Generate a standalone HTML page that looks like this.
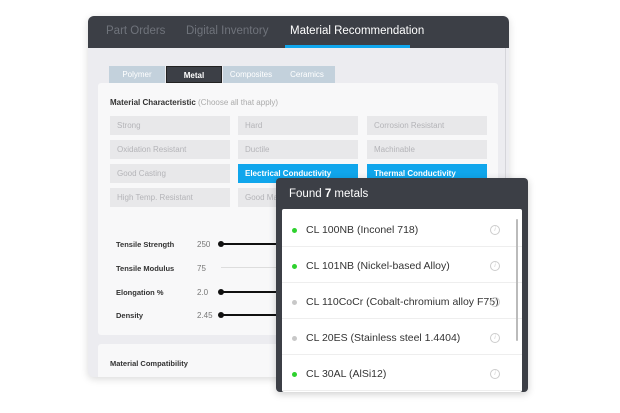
<!DOCTYPE html>
<html><head><style>
*{margin:0;padding:0;box-sizing:border-box}
body{width:620px;height:413px;background:#fff;font-family:"Liberation Sans",sans-serif;position:relative;overflow:hidden}
.abs{position:absolute}
.main{left:88px;top:16px;width:421px;height:361px;background:#ececf0;border-radius:6px;box-shadow:0 2px 8px rgba(0,0,0,.15);overflow:hidden}
.hdr{left:0;top:0;width:421px;height:32px;background:#3c3f46}
.tab{top:9px;font-size:11.5px;color:#6f737b}
.stab{top:50px;height:17px;width:56px;background:#c3d1dc;color:#fff;font-size:8px;text-align:center;line-height:17px}
.card{left:10px;top:67px;width:400px;height:252px;background:#f8f8f9;border-radius:3px}
.btn{width:120px;height:19px;background:#e8e8ea;color:#b4b4b8;font-size:8px;line-height:19px;padding-left:7px}
.btn.on{background:#10a6ec;color:#fff;font-weight:bold}
.lbl{font-size:7.5px;font-weight:bold;color:#333}
.val{font-size:8px;color:#777}
.line{height:2px;background:#111}
.knob{width:6px;height:6px;border-radius:3px;background:#111}
.pop{left:276px;top:178px;width:252px;height:214px;background:#3c3f46;border-radius:4px;box-shadow:0 2px 8px rgba(0,0,0,.2)}
.list{left:6px;top:31px;width:240px;height:183px;background:#fff;border-radius:2px;overflow:hidden}
.row{left:0;width:240px;height:36px;border-bottom:1px solid #eee;font-size:10.5px;color:#333}
.row span{position:absolute;left:24px;top:13px}
.dot{position:absolute;left:10px;top:17px;width:5px;height:5px;border-radius:3px}
.info{position:absolute;left:208px;top:14px;width:10px;height:10px;border:1px solid #ccc;border-radius:5px;font-size:6px;color:#ccc;text-align:center;line-height:8px;font-style:italic}
</style></head><body>
<div class="abs main">
 <div class="abs hdr"></div>
 <div class="abs tab" style="left:18px">Part Orders</div>
 <div class="abs tab" style="left:98px">Digital Inventory</div>
 <div class="abs tab" style="left:202px;color:#fff">Material Recommendation</div>
 <div class="abs" style="left:197px;top:29px;width:125px;height:3px;background:#10a6ec"></div>
 <div class="abs stab" style="left:21px">Polymer</div>
 <div class="abs stab" style="left:78px;background:#3c3f46;border:1px solid #222;font-weight:bold">Metal</div>
 <div class="abs stab" style="left:135px">Composites</div>
 <div class="abs stab" style="left:191px">Ceramics</div>
 <div class="abs card"></div>
 <div class="abs" style="left:22px;top:82px;font-size:8px;color:#333;font-weight:bold">Material Characteristic <span style="font-weight:normal;color:#aaa">(Choose all that apply)</span></div>
 <div class="abs btn" style="left:22px;top:100px">Strong</div>
 <div class="abs btn" style="left:150px;top:100px">Hard</div>
 <div class="abs btn" style="left:279px;top:100px">Corrosion Resistant</div>
 <div class="abs btn" style="left:22px;top:124px">Oxidation Resistant</div>
 <div class="abs btn" style="left:150px;top:124px">Ductile</div>
 <div class="abs btn" style="left:279px;top:124px">Machinable</div>
 <div class="abs btn" style="left:22px;top:148px">Good Casting</div>
 <div class="abs btn on" style="left:150px;top:148px">Electrical Conductivity</div>
 <div class="abs btn on" style="left:279px;top:148px">Thermal Conductivity</div>
 <div class="abs btn" style="left:22px;top:172px">High Temp. Resistant</div>
 <div class="abs btn" style="left:150px;top:172px">Good Machinability</div>
 <div class="abs lbl" style="left:28px;top:224px">Tensile Strength</div><div class="abs val" style="left:109px;top:224px">250</div>
 <div class="abs knob" style="left:130px;top:225px"></div><div class="abs line" style="left:133px;top:227px;width:60px"></div>
 <div class="abs lbl" style="left:28px;top:248px">Tensile Modulus</div><div class="abs val" style="left:109px;top:248px">75</div>
 <div class="abs" style="left:133px;top:251px;width:60px;height:1px;background:#ddd"></div>
 <div class="abs lbl" style="left:28px;top:272px">Elongation %</div><div class="abs val" style="left:109px;top:272px">2.0</div>
 <div class="abs knob" style="left:130px;top:273px"></div><div class="abs line" style="left:133px;top:275px;width:60px"></div>
 <div class="abs lbl" style="left:28px;top:295px">Density</div><div class="abs val" style="left:109px;top:295px">2.45</div>
 <div class="abs knob" style="left:130px;top:296px"></div><div class="abs line" style="left:133px;top:298px;width:60px"></div>
 <div class="abs card" style="top:328px;height:40px"></div>
 <div class="abs lbl" style="left:22px;top:343px">Material Compatibility</div>
 <div class="abs" style="left:417px;top:32px;width:1px;height:329px;background:#d5d5da"></div>
</div>
<div class="abs pop">
 <div class="abs" style="left:13px;top:10px;color:#fff;font-size:11.5px">Found <b>7</b> metals</div>
 <div class="abs list">
  <div class="abs row" style="top:2px"><i class="dot" style="background:#2ed12e"></i><span>CL 100NB (Inconel 718)</span><i class="info">i</i></div>
  <div class="abs row" style="top:38px"><i class="dot" style="background:#2ed12e"></i><span>CL 101NB (Nickel-based Alloy)</span><i class="info">i</i></div>
  <div class="abs row" style="top:74px"><i class="dot" style="background:#c8c8c8"></i><span>CL 110CoCr (Cobalt-chromium alloy F75)</span><i class="info">i</i></div>
  <div class="abs row" style="top:110px"><i class="dot" style="background:#c8c8c8"></i><span>CL 20ES (Stainless steel 1.4404)</span><i class="info">i</i></div>
  <div class="abs row" style="top:146px"><i class="dot" style="background:#2ed12e"></i><span>CL 30AL (AlSi12)</span><i class="info">i</i></div>
  <div class="abs" style="left:234px;top:10px;width:2px;height:122px;background:#bbb;border-radius:1px"></div>
 </div>
</div>
</body></html>
